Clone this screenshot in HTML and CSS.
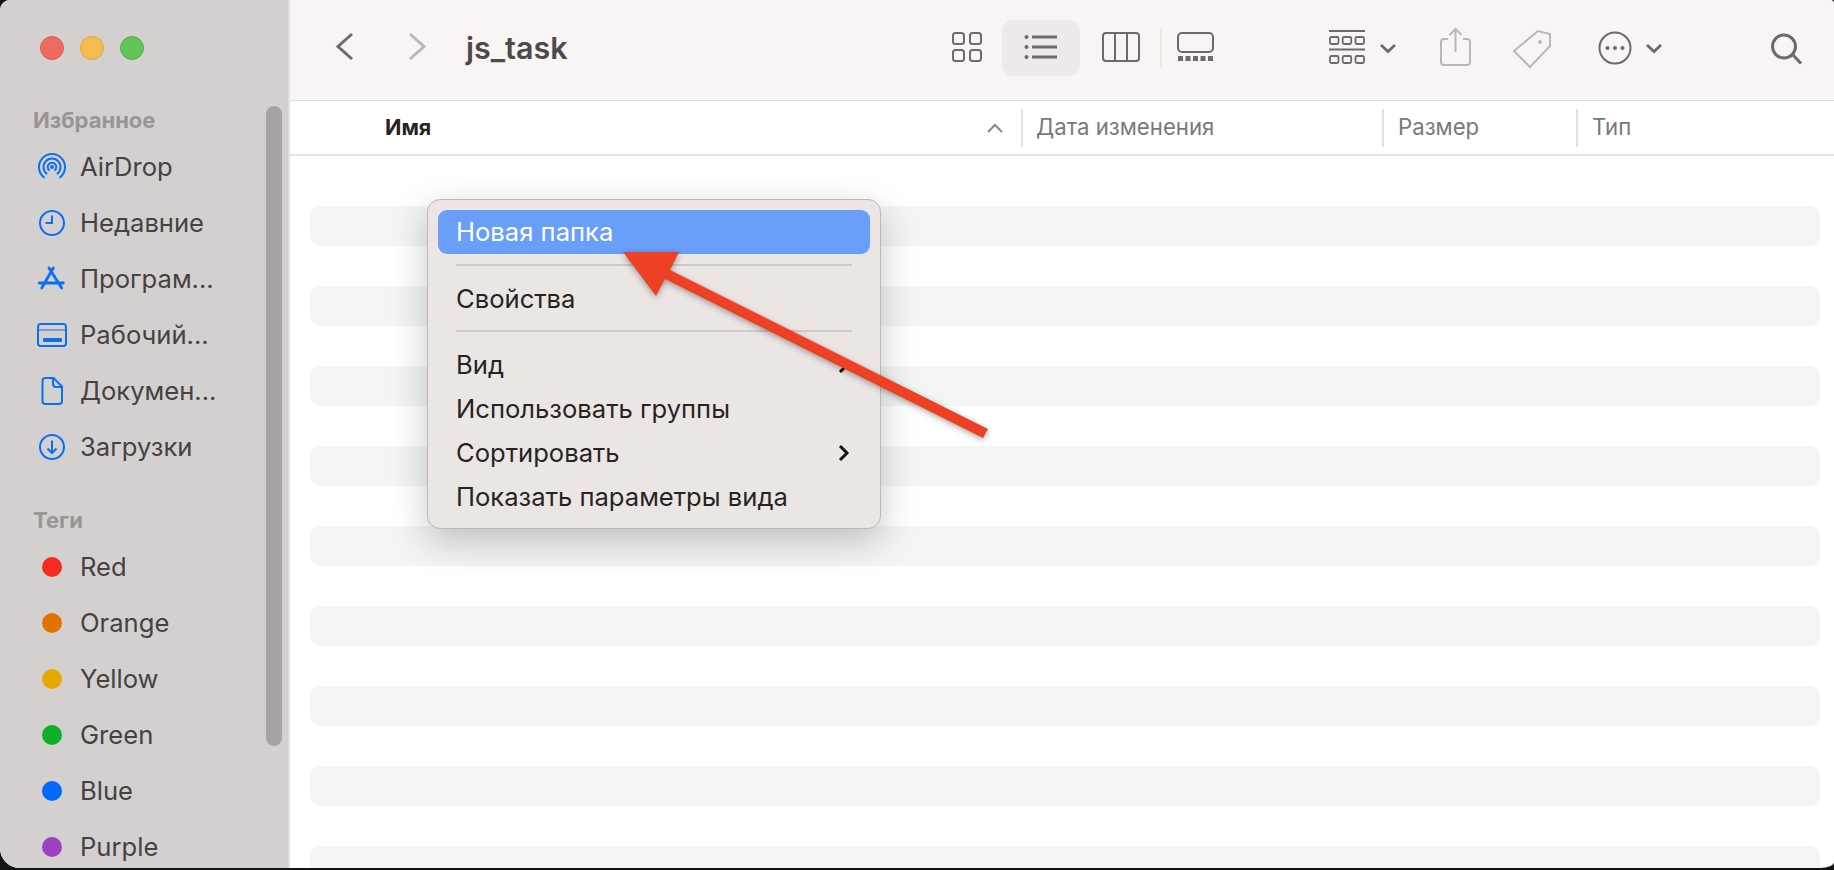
FILE: index.html
```html
<!DOCTYPE html>
<html lang="ru">
<head>
  <meta charset="UTF-8" />
  <title>js_task</title>
  <link rel="stylesheet" href="styles.css">
</head>
<body>
  <div class="window">
    <aside class="sidebar">
      <div class="traffic">
        <span class="light red"></span>
        <span class="light yellow"></span>
        <span class="light green"></span>
      </div>
      <div class="side-label">Избранное</div>
      <div class="side-item">
        <svg class="side-icon" viewBox="0 0 30 28"><path d="M7.5 24.7a13 13 0 1 1 15 0M10.1 21a8.5 8.5 0 1 1 9.8 0M12.5 17.5a4.3 4.3 0 1 1 5 0"/><circle class="solid" cx="15" cy="14" r="2"/></svg>
        <span>AirDrop</span>
      </div>
      <div class="side-item">
        <svg class="side-icon" viewBox="0 0 30 28"><circle cx="15" cy="14" r="12"/><path d="M15 6.5V14H8.5"/></svg>
        <span>Недавние</span>
      </div>
      <div class="side-item">
        <svg class="side-icon bold" viewBox="0 0 30 28"><path d="M12 3l12.7 20M16.3 3L4.7 23M2.3 18h24"/></svg>
        <span>Програм...</span>
      </div>
      <div class="side-item">
        <svg class="side-icon" viewBox="0 0 30 28"><rect x="1" y="3" width="28" height="22" rx="3"/><path class="hair" d="M1 9h28"/><rect class="solid" x="6" y="17" width="19" height="4" rx="1"/></svg>
        <span>Рабочий...</span>
      </div>
      <div class="side-item">
        <svg class="side-icon" viewBox="0 0 30 28"><path d="M8 1h8.5L25 9.5V24a3 3 0 0 1-2.5 3H8a3 3 0 0 1-2.500-3V4A3 3 0 0 1 8 1zM16 1v6a3 3 0 0 0 3 3h6"/></svg>
        <span>Докумен...</span>
      </div>
      <div class="side-item">
        <svg class="side-icon" viewBox="0 0 30 28"><circle cx="15" cy="14" r="12"/><path d="M15 7.500V20M10.500 15.500L15 20l4.500-4.500"/></svg>
        <span>Загрузки</span>
      </div>
      <div class="side-label tags">Теги</div>
      <div class="side-item"><i class="dot" style="background:#f42c20"></i><span>Red</span></div>
      <div class="side-item"><i class="dot" style="background:#e37300"></i><span>Orange</span></div>
      <div class="side-item"><i class="dot" style="background:#e4aa00"></i><span>Yellow</span></div>
      <div class="side-item"><i class="dot" style="background:#0eb126"></i><span>Green</span></div>
      <div class="side-item"><i class="dot" style="background:#0069f5"></i><span>Blue</span></div>
      <div class="side-item"><i class="dot" style="background:#9c40c0"></i><span>Purple</span></div>
      <div class="scrollbar"></div>
    </aside>

    <main class="main">
      <header class="toolbar">
        <svg class="tool nav" width="28" height="40"><path d="M21 6L7 18.500L21 31"/></svg>
        <svg class="tool nav off fwd" width="28" height="40"><path d="M7 6l14 12.500L7 31"/></svg>
        <div class="title">js_task</div>

        <svg class="tool" width="38" height="40"><rect x="5" y="5" width="11" height="11" rx="2.500"/><rect x="22" y="5" width="11" height="11" rx="2.500"/><rect x="5" y="22" width="11" height="11" rx="2.500"/><rect x="22" y="22" width="11" height="11" rx="2.500"/></svg>
        <div class="view-active">
          <svg class="tool" width="40" height="40"><path class="thick" d="M11 9h25M11 19h25M11 29h25"/><circle class="fillin" cx="5.500" cy="9" r="2"/><circle class="fillin" cx="5.500" cy="19" r="2"/><circle class="fillin" cx="5.500" cy="29" r="2"/></svg>
        </div>
        <svg class="tool columns" width="46" height="40"><rect x="5" y="5" width="36" height="28" rx="3"/><path d="M17 5v28M29 5v28"/></svg>
        <span class="tool-sep"></span>
        <svg class="tool gallery" width="46" height="40"><rect x="5" y="5" width="35" height="19" rx="4"/><g class="fillin"><rect x="5" y="28" width="5" height="5"/><rect x="12.500" y="28" width="5" height="5"/><rect x="20" y="28" width="5" height="5"/><rect x="27.500" y="28" width="5" height="5"/><rect x="35" y="28" width="5" height="5"/></g></svg>

        <svg class="tool groups" width="44" height="40"><path d="M4 3h36M4 21.500h36"/><g class="slim"><rect x="5" y="9" width="8.500" height="7" rx="1.500"/><rect x="17.700" y="9" width="8.500" height="7" rx="1.500"/><rect x="30.500" y="9" width="8.500" height="7" rx="1.500"/><rect x="5" y="28" width="8.500" height="7" rx="1.500"/><rect x="17.700" y="28" width="8.500" height="7" rx="1.500"/><rect x="30.500" y="28" width="8.500" height="7" rx="1.500"/></g></svg>
        <svg class="tool chev" width="20" height="40"><path d="M3 17l7 6.500L17 17"/></svg>
        <svg class="tool off share" width="36" height="48"><path d="M11 15H7a3 3 0 0 0-3 3v20a3 3 0 0 0 3 3h23a3 3 0 0 0 3-3V18a3 3 0 0 0-3-3h-4M18.500 5v23M12.500 11l6-6 6 6"/></svg>
        <svg class="tool off tag" width="44" height="48"><path d="M3 27L27 7l12 3v12L19 43z"/><circle class="fillin" cx="29" cy="18" r="2"/></svg>
        <svg class="tool more" width="40" height="40"><circle cx="20" cy="20" r="15.500"/><circle class="fillin" cx="12.500" cy="20" r="2"/><circle class="fillin" cx="20" cy="20" r="2"/><circle class="fillin" cx="27.500" cy="20" r="2"/></svg>
        <svg class="tool chev" width="20" height="40"><path d="M3 17l7 6.500L17 17"/></svg>
        <svg class="tool search" width="40" height="40"><circle cx="17" cy="18.500" r="11.500"/><path class="thick" d="M26 27l8 8.500"/></svg>
      </header>

      <div class="columns-head">
        <div class="col col-name">
          <span class="name-label">Имя</span>
          <svg class="caret" width="16" height="10"><path d="M1 9l7-7 7 7"/></svg>
        </div>
        <div class="col col-date">Дата изменения</div>
        <div class="col col-size">Размер</div>
        <div class="col col-type">Тип</div>
      </div>

      <div class="rows">
        <div class="row"></div>
        <div class="row"></div>
        <div class="row"></div>
        <div class="row"></div>
        <div class="row"></div>
        <div class="row"></div>
        <div class="row"></div>
        <div class="row"></div>
        <div class="row"></div>
      </div>
    </main>

    <div class="menu">
      <div class="menu-item active">Новая папка</div>
      <div class="menu-sep"></div>
      <div class="menu-item">Свойства</div>
      <div class="menu-sep second"></div>
      <div class="menu-item">Вид <svg class="sub" width="12" height="18"><path d="M2 2l7 7-7 7"/></svg></div>
      <div class="menu-item">Использовать группы</div>
      <div class="menu-item">Сортировать <svg class="sub" width="12" height="18"><path d="M2 2l7 7-7 7"/></svg></div>
      <div class="menu-item">Показать параметры вида</div>
    </div>

    <svg class="arrow" width="390" height="210"><polygon points="13,12 69,12 60,30 378,189 373,198 55,39 46,56"/></svg>
  </div>
</body>
</html>
```

FILE: styles.css
```css
body {
  margin: 0;
  background: #141414;
  font-family: Inter, "Noto Sans", sans-serif;
  overflow: hidden;
}

.window {
  position: relative;
  display: flex;
  height: 868px;
  overflow: hidden;
  background: white;
  border-radius: 10px 4px 14px 20px / 10px 4px 6px 20px;
}

/* sidebar */
.sidebar {
  position: relative;
  width: 288px;
  flex-shrink: 0;
  background: #d5d0d0;
  border-right: 2px solid #e4dfdf;
  color: #454241;
  font-size: 25.6px;
}

.traffic {
  display: flex;
  gap: 16px;
  padding: 36px 0 0 40px;
  height: 67px;
}

.light {
  width: 24px;
  height: 24px;
  border-radius: 50%;
  box-sizing: border-box;
}

.red { background: #ee6a5f; border: 1px solid #d95a50; }
.yellow { background: #f5bd4f; border: 1px solid #dfa63f; }
.green { background: #61c454; border: 1px solid #52ad46; }

.side-label {
  height: 36px;
  line-height: 34px;
  padding-left: 33px;
  font-size: 22px;
  font-weight: 700;
  color: #9a9594;
}

.side-label.tags {
  margin-top: 28px;
}

.side-item {
  display: flex;
  align-items: center;
  height: 56px;
  padding-left: 37px;
}

.side-item span {
  padding-bottom: 2px;
}

.side-icon {
  width: 30px;
  height: 28px;
  margin-right: 13px;
  fill: none;
  stroke: #0a6ff0;
  stroke-width: 2;
  flex-shrink: 0;
}

.side-icon.bold {
  stroke-width: 2.800;
  stroke-linecap: round;
}

.side-icon .solid {
  fill: #0a6ff0;
  stroke: none;
}

.side-icon .hair {
  stroke-width: 1;
}

.dot {
  width: 20px;
  height: 20px;
  border-radius: 50%;
  margin: 0 18px 0 5px;
}

.scrollbar {
  position: absolute;
  top: 106px;
  left: 266px;
  width: 16px;
  height: 640px;
  border-radius: 8px;
  background: #a8a3a2;
}

/* main */
.main {
  flex: 1;
  min-width: 0;
  display: flex;
  flex-direction: column;
}

.toolbar {
  display: flex;
  align-items: center;
  flex-shrink: 0;
  box-sizing: border-box;
  height: 101px;
  padding: 0 0 5px 41px;
  background: #fbf4f4;
  border-bottom: 1px solid #dcdada;
}

.tool {
  flex-shrink: 0;
  fill: none;
  stroke: #6f6a69;
  stroke-width: 2;
}

.tool.off {
  stroke: #bcb7b6;
}

.tool .fillin {
  fill: #6f6a69;
  stroke: none;
}

.tool.off .fillin {
  fill: #bcb7b6;
}

.tool .thick {
  stroke-width: 3;
}

.tool .slim {
  stroke-width: 1.800;
}

.nav {
  stroke-width: 3;
}

.fwd { margin-left: 44px; }

.title {
  width: 482px;
  margin-left: 35px;
  font-size: 30.500px;
  font-weight: 600;
  color: #4d4a4a;
}

.view-active {
  display: flex;
  align-items: center;
  justify-content: center;
  width: 78px;
  height: 56px;
  margin-left: 16px;
  border-radius: 11px;
  background: #efeaea;
}

.columns { margin-left: 18px; }

.tool-sep {
  width: 2px;
  height: 40px;
  margin-left: 16px;
  background: #ece6e5;
}

.gallery { margin-left: 11px; }
.groups { margin-left: 106px; }

.chev {
  margin-left: 9px;
  stroke-width: 2.800;
}

.share { margin-left: 39px; }
.tag { margin-left: 38px; }
.more { margin-left: 39.500px; }
.more + .chev { margin-left: 9.500px; }

.search {
  margin-left: 103px;
  stroke-width: 3;
}

.columns-head {
  display: flex;
  align-items: center;
  box-sizing: border-box;
  height: 55px;
  flex-shrink: 0;
  border-bottom: 2px solid #e3e3e3;
  font-size: 22.200px;
  color: #7b7877;
}

.col {
  box-sizing: border-box;
  height: 38px;
  line-height: 36px;
  padding-left: 14px;
  border-left: 2px solid #e3e3e3;
}

.col-name {
  display: flex;
  justify-content: space-between;
  align-items: center;
  width: 731px;
  padding: 0 18px 0 95px;
  border-left: 0;
  font-size: 21.500px;
  font-weight: 700;
  color: #262423;
}

.name-label {
  padding-bottom: 2px;
}

.col-date { width: 361px; padding-left: 13px; }
.col-size { width: 194px; }
.col-type { flex: 1; }

.caret {
  fill: none;
  stroke: #8a8685;
  stroke-width: 2;
}

.rows {
  display: flex;
  flex-direction: column;
  gap: 40px;
  padding: 50px 14px 0 20px;
}

.row {
  height: 40px;
  flex-shrink: 0;
  border-radius: 10px;
  background: #f3f4f4;
}

/* context menu */
.menu {
  position: absolute;
  top: 199px;
  left: 427px;
  width: 454px;
  height: 330px;
  box-sizing: border-box;
  padding: 10px;
  border: 1px solid #bcb8b6;
  border-radius: 13px;
  background: #ebe6e4;
  box-shadow: 0 12px 36px rgba(0, 0, 0, 0.22);
  font-size: 25.600px;
  color: #262423;
}

.menu-item {
  display: flex;
  justify-content: space-between;
  align-items: center;
  box-sizing: border-box;
  height: 44px;
  padding: 0 20px 2px 18px;
  border-radius: 9px;
}

.menu-item.active {
  background: #699ef9;
  color: white;
}

.menu-sep {
  height: 2px;
  margin: 10px 18px 11px;
  background: #cfc9c7;
}

.menu-sep.second {
  margin-top: 9px;
}

.sub {
  margin-top: 2px;
  fill: none;
  stroke: #151312;
  stroke-width: 3;
}

.arrow {
  position: absolute;
  top: 240px;
  left: 610px;
  fill: #ee4024;
  filter: drop-shadow(0 2px 3px rgba(0, 0, 0, 0.35));
}
```
